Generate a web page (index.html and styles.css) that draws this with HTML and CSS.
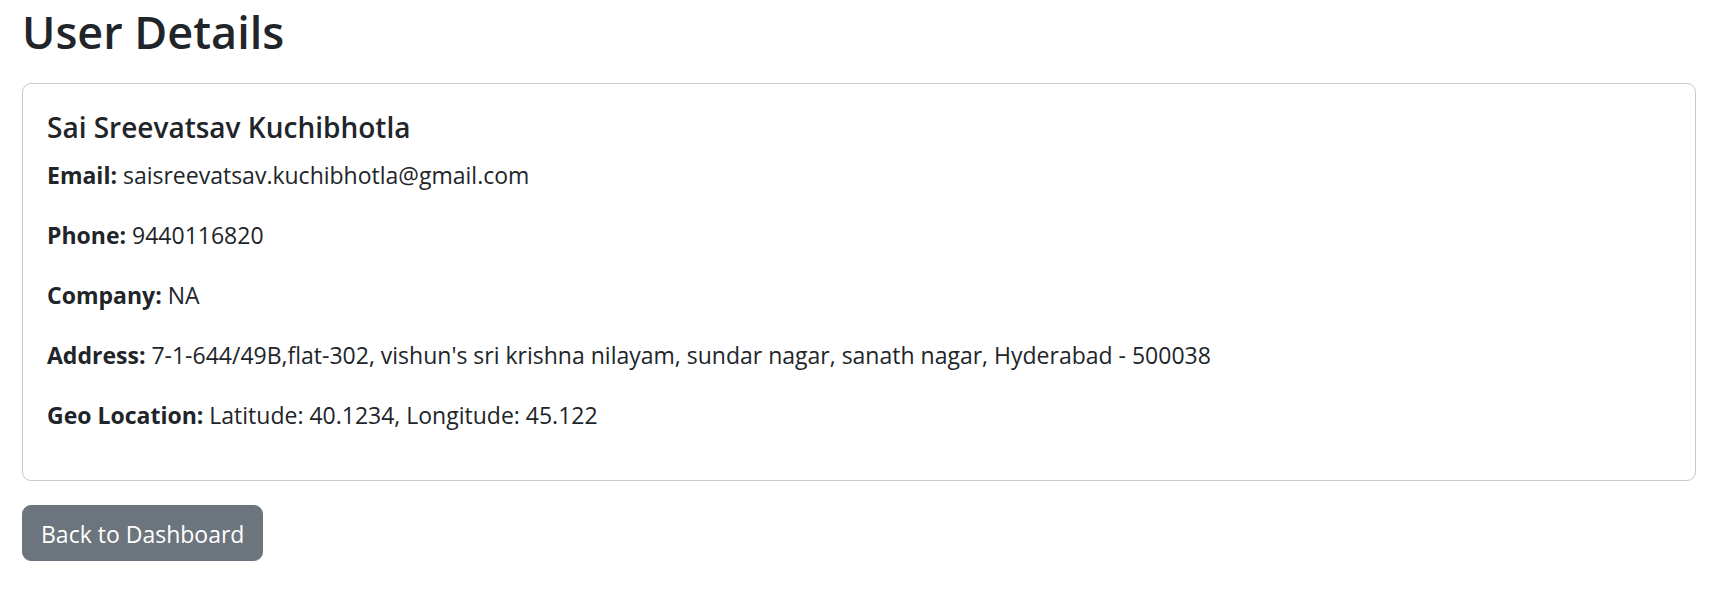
FILE: index.html
```html
<!DOCTYPE html>
<html lang="en">
<head>
<meta charset="utf-8">
<title>User Details</title>
<link rel="stylesheet" href="styles.css">
</head>
<body>
<main class="container">
  <h1 class="page-title">User Details</h1>
  <section class="card">
    <h2 class="card-title">Sai Sreevatsav Kuchibhotla</h2>
    <p class="card-text"><strong>Email:</strong> saisreevatsav.kuchibhotla@gmail.com</p>
    <p class="card-text"><strong>Phone:</strong> 9440116820</p>
    <p class="card-text"><strong>Company:</strong> NA</p>
    <p class="card-text"><strong>Address:</strong> 7-1-644/49B,flat-302, vishun's sri krishna nilayam, sundar nagar, sanath nagar, Hyderabad - 500038</p>
    <p class="card-text"><strong>Geo Location:</strong> Latitude: 40.1234, Longitude: 45.122</p>
  </section>
  <button class="btn" type="button">Back to Dashboard</button>
</main>
</body>
</html>
```
FILE: styles.css
```css
* {
  box-sizing: border-box;
}

body {
  margin: 0;
  background: #fff;
  color: #212529;
  font-family: "Segoe UI", "Open Sans", "Noto Sans", sans-serif;
  font-size: 23px;
  line-height: 36px;
}

.container {
  padding: 4px 24px 24px 22px;
}

.page-title {
  margin: 0 0 24px;
  font-size: 45px;
  font-weight: 600;
  line-height: 55px;
}

.card {
  margin-bottom: 24px;
  padding: 25px 24px 23px;
  border: 1px solid #c8c9ca;
  border-radius: 9px;
}

.card-title {
  margin: 0 0 12px;
  font-size: 28px;
  font-weight: 600;
  line-height: 36px;
}

.card-text {
  margin: 0 0 24px;
}

.card-text strong {
  font-weight: 700;
}

.btn {
  padding: 10px 18px 8px;
  border: 1px solid #6c757d;
  border-radius: 9px;
  background: #6c757d;
  color: #fff;
  font: inherit;
  cursor: pointer;
}
```
